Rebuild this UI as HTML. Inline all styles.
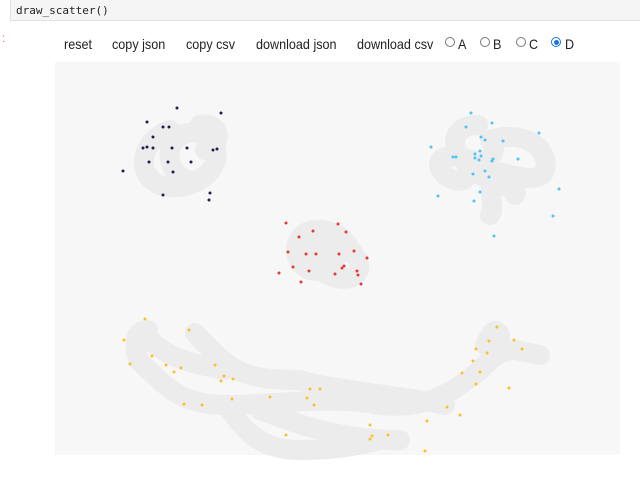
<!DOCTYPE html>
<html><head><style>
body{margin:0;width:640px;height:478px;background:#fff;position:relative;overflow:hidden;font-family:"Liberation Sans",sans-serif}
.code{position:absolute;left:10px;top:-1px;width:640px;height:22px;background:#f5f5f5;border:1px solid #e0e0e0;font-family:"DejaVu Sans Mono","Liberation Mono",monospace;font-size:11px;line-height:22px;padding-left:5px;box-sizing:border-box;color:#222}
.colon{position:absolute;left:2px;top:31px;color:#e57373;font-size:12px}
.bar{position:absolute;top:36px;font-size:14px;color:#222;white-space:nowrap;transform:scaleX(0.9);transform-origin:left top}
.rad{position:absolute;top:37px;width:10px;height:10px;border:1px solid #767676;border-radius:50%;box-sizing:border-box;background:#fff}
.rad.on{border:1px solid #1a73e8;}
.rad.on::after{content:"";position:absolute;left:1.5px;top:1.5px;width:5px;height:5px;border-radius:50%;background:#1a73e8}
svg{position:absolute;left:0;top:0}
</style></head><body>
<div class="code">draw_scatter()</div>
<div class="colon">:</div>
<div class="bar" style="left:64px">reset</div>
<div class="bar" style="left:112px">copy json</div>
<div class="bar" style="left:186px">copy csv</div>
<div class="bar" style="left:256px">download json</div>
<div class="bar" style="left:357px">download csv</div>
<div class="rad" style="left:445px"></div><div class="bar" style="left:458px">A</div>
<div class="rad" style="left:480px"></div><div class="bar" style="left:493px">B</div>
<div class="rad" style="left:516px"></div><div class="bar" style="left:529px">C</div>
<div class="rad on" style="left:551px"></div><div class="bar" style="left:565px">D</div>
<svg width="640" height="478">
<rect x="55" y="62" width="565" height="393" fill="#f7f7f7"/>
<g fill="none" stroke="#ececec" stroke-linecap="round" stroke-linejoin="round" stroke-width="20">
<path d="M170 130 C140 140 135 175 160 185 C190 195 225 170 215 145 C205 125 175 130 170 150 C165 175 195 190 205 175"/>
<path d="M200 125 C220 120 225 145 205 150"/>
<path d="M478 125 C450 125 450 150 465 160 C475 190 450 180 445 175 C430 160 445 150 470 160 C490 165 500 150 490 140 C520 130 550 145 545 170 C540 185 510 175 490 170 C490 200 495 210 490 215 M480 175 C500 185 520 190 515 195"/>
<path d="M300 238 C290 250 300 275 320 270 C340 285 365 280 358 260 C350 250 345 235 330 232 C315 225 300 235 300 238"/>
<path d="M310 245 L345 250 L330 262 L305 262"/>
<path d="M148 330 C130 330 135 355 140 362 C165 385 180 405 225 405 C280 405 330 395 380 405 C430 410 455 390 480 370 C495 355 500 345 500 335 C495 325 490 335 485 345"/>
<path d="M195 333 C230 370 240 380 300 380 C330 390 400 395 445 405"/>
<path d="M150 340 C170 360 200 365 225 370"/>
<path d="M230 410 C250 440 270 450 300 450 C340 450 360 445 380 440 M260 410 C300 425 340 440 400 440"/>
<path d="M480 370 C490 360 500 350 515 350 L540 355"/>
</g>
<g fill="#2a1a4a">
<circle cx="177" cy="108" r="1.5"/><circle cx="221" cy="113" r="1.5"/><circle cx="147" cy="122" r="1.5"/><circle cx="163" cy="127" r="1.5"/><circle cx="169" cy="127" r="1.5"/><circle cx="153" cy="137" r="1.5"/><circle cx="143" cy="148" r="1.5"/><circle cx="147" cy="147" r="1.5"/><circle cx="153" cy="148" r="1.5"/><circle cx="172" cy="148" r="1.5"/><circle cx="187" cy="148" r="1.5"/><circle cx="213" cy="150" r="1.5"/><circle cx="217" cy="149" r="1.5"/><circle cx="149" cy="162" r="1.5"/><circle cx="168" cy="162" r="1.5"/><circle cx="173" cy="172" r="1.5"/><circle cx="191" cy="162" r="1.5"/><circle cx="123" cy="171" r="1.5"/><circle cx="163" cy="195" r="1.5"/><circle cx="210" cy="193" r="1.5"/><circle cx="209" cy="200" r="1.5"/>
</g>
<g fill="#4fc3f7">
<circle cx="471" cy="113" r="1.5"/><circle cx="466" cy="127" r="1.5"/><circle cx="492" cy="123" r="1.5"/><circle cx="481" cy="137" r="1.5"/><circle cx="485" cy="140" r="1.5"/><circle cx="503" cy="141" r="1.5"/><circle cx="539" cy="133" r="1.5"/><circle cx="431" cy="147" r="1.5"/><circle cx="453" cy="157" r="1.5"/><circle cx="456" cy="157" r="1.5"/><circle cx="475" cy="154" r="1.5"/><circle cx="480" cy="151" r="1.5"/><circle cx="475" cy="158" r="1.5"/><circle cx="481" cy="156" r="1.5"/><circle cx="479" cy="160" r="1.5"/><circle cx="493" cy="159" r="1.5"/><circle cx="492" cy="161" r="1.5"/><circle cx="518" cy="159" r="1.5"/><circle cx="473" cy="174" r="1.5"/><circle cx="485" cy="171" r="1.5"/><circle cx="489" cy="177" r="1.5"/><circle cx="480" cy="192" r="1.5"/><circle cx="438" cy="196" r="1.5"/><circle cx="474" cy="201" r="1.5"/><circle cx="559" cy="189" r="1.5"/><circle cx="553" cy="216" r="1.5"/><circle cx="494" cy="236" r="1.5"/>
</g>
<g fill="#e53935">
<circle cx="286" cy="223" r="1.5"/><circle cx="338" cy="224" r="1.5"/><circle cx="313" cy="231" r="1.5"/><circle cx="346" cy="232" r="1.5"/><circle cx="299" cy="237" r="1.5"/><circle cx="288" cy="252" r="1.5"/><circle cx="306" cy="254" r="1.5"/><circle cx="316" cy="254" r="1.5"/><circle cx="339" cy="254" r="1.5"/><circle cx="354" cy="251" r="1.5"/><circle cx="367" cy="258" r="1.5"/><circle cx="293" cy="267" r="1.5"/><circle cx="309" cy="271" r="1.5"/><circle cx="344" cy="266" r="1.5"/><circle cx="342" cy="268" r="1.5"/><circle cx="357" cy="271" r="1.5"/><circle cx="358" cy="275" r="1.5"/><circle cx="335" cy="274" r="1.5"/><circle cx="279" cy="273" r="1.5"/><circle cx="301" cy="282" r="1.5"/><circle cx="361" cy="284" r="1.5"/>
</g>
<g fill="#fbc02d">
<circle cx="145" cy="319" r="1.5"/><circle cx="124" cy="340" r="1.5"/><circle cx="189" cy="330" r="1.5"/><circle cx="130" cy="364" r="1.5"/><circle cx="152" cy="356" r="1.5"/><circle cx="166" cy="365" r="1.5"/><circle cx="174" cy="372" r="1.5"/><circle cx="181" cy="368" r="1.5"/><circle cx="215" cy="365" r="1.5"/><circle cx="224" cy="376" r="1.5"/><circle cx="221" cy="381" r="1.5"/><circle cx="233" cy="379" r="1.5"/><circle cx="184" cy="404" r="1.5"/><circle cx="202" cy="405" r="1.5"/><circle cx="232" cy="399" r="1.5"/><circle cx="270" cy="397" r="1.5"/><circle cx="310" cy="389" r="1.5"/><circle cx="320" cy="389" r="1.5"/><circle cx="307" cy="398" r="1.5"/><circle cx="314" cy="405" r="1.5"/><circle cx="370" cy="425" r="1.5"/><circle cx="372" cy="436" r="1.5"/><circle cx="370" cy="439" r="1.5"/><circle cx="388" cy="435" r="1.5"/><circle cx="286" cy="435" r="1.5"/><circle cx="427" cy="421" r="1.5"/><circle cx="447" cy="407" r="1.5"/><circle cx="460" cy="415" r="1.5"/><circle cx="462" cy="373" r="1.5"/><circle cx="476" cy="349" r="1.5"/><circle cx="473" cy="361" r="1.5"/><circle cx="487" cy="353" r="1.5"/><circle cx="489" cy="341" r="1.5"/><circle cx="497" cy="327" r="1.5"/><circle cx="514" cy="340" r="1.5"/><circle cx="522" cy="349" r="1.5"/><circle cx="476" cy="384" r="1.5"/><circle cx="480" cy="372" r="1.5"/><circle cx="509" cy="388" r="1.5"/><circle cx="425" cy="451" r="1.5"/>
</g>
</svg>
</body></html>
